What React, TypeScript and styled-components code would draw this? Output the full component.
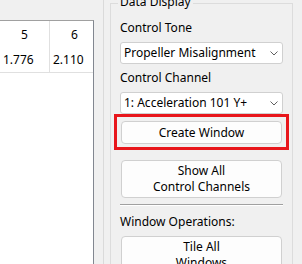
import styled, { createGlobalStyle } from 'styled-components';

const GlobalStyle = createGlobalStyle`
  html, body {
    margin: 0;
    padding: 0;
    background: #f0f0f0;
    overflow: hidden;
  }
  body {
    font-family: 'Noto Sans', 'Segoe UI', sans-serif;
    font-size: 12px;
    color: #000;
  }
`;

// ---------------------------------------------------------------------------
// Layout
// ---------------------------------------------------------------------------

const Screen = styled.div`
  display: flex;
  width: 302px;
  height: 264px;
  overflow: hidden;
  background: #f0f0f0;
`;

const GridPane = styled.div`
  flex: none;
  width: 93px;
  margin-top: 20px;
  background: #fff;
  border-top: 1px solid #a0a0a0;
  border-right: 1px solid #828790;
  overflow: hidden;
`;

const Grid = styled.table`
  table-layout: fixed;
  border-collapse: separate;
  border-spacing: 0;
  width: 100px;
`;

const HeaderCell = styled.th`
  box-sizing: border-box;
  width: 50px;
  height: 26px;
  padding: 0;
  font-weight: 400;
  text-align: center;
  border-right: 1px solid #e0e0e0;
`;

const ValueCell = styled.td`
  box-sizing: border-box;
  width: 50px;
  height: 26px;
  padding: 0 0 0 3px;
  text-align: left;
  white-space: nowrap;
  border-right: 1px solid #e0e0e0;
  border-bottom: 1px solid #e0e0e0;
`;

const SidePanel = styled.div`
  flex: none;
  margin-left: 9px;
  padding-left: 6px;
  border-left: 1px solid #dadada;
`;

const GroupBox = styled.section`
  position: relative;
  display: flex;
  flex-direction: column;
  width: 163px;
  margin-top: 3px;
  padding: 16px 9px 0;
  border: 1px solid #dcdcdc;
  border-bottom: none;
`;

const GroupTitle = styled.span`
  position: absolute;
  top: -10px;
  left: 7px;
  padding: 0 2px;
  line-height: 16px;
  background: #f0f0f0;
`;

const FieldLabel = styled.div<{ $gap: number }>`
  margin-top: ${({ $gap }) => $gap}px;
  line-height: 16px;
  white-space: nowrap;
`;

const Combo = styled.div`
  box-sizing: border-box;
  display: flex;
  align-items: center;
  justify-content: space-between;
  height: 22px;
  margin-top: 6px;
  padding: 0 4px 0 3px;
  background: #fff;
  border: 1px solid #d0d0d0;
  border-radius: 3px;
  line-height: 16px;
  white-space: nowrap;

  svg {
    flex: none;
  }
`;

const Button = styled.button<{ $gap: number; $tall?: boolean; $marked?: boolean }>`
  position: relative;
  box-sizing: border-box;
  display: flex;
  align-items: center;
  justify-content: center;
  height: ${({ $tall }) => ($tall ? 38 : 23)}px;
  margin: ${({ $gap }) => $gap}px 1px 0;
  padding: 0;
  font: inherit;
  line-height: 16px;
  color: #000;
  text-align: center;
  background: #fdfdfd;
  border: 1px solid #d0d0d0;
  border-radius: 4px;
  flex: none;

  /* red highlight frame drawn over the surrounding area */
  &::after {
    content: '';
    display: ${({ $marked }) => ($marked ? 'block' : 'none')};
    position: absolute;
    top: -8px;
    bottom: -7px;
    left: -8px;
    right: -8px;
    border: 3px solid #e8161b;
    pointer-events: none;
  }
`;

const Separator = styled.div`
  height: 0;
  margin-top: 6px;
  border-top: 1px solid #a0a0a0;
  border-bottom: 1px solid #fff;
`;

const Chevron = () => (
  <svg width="8" height="5" viewBox="0 0 8 5">
    <polyline points="0.5,0.5 4,4 7.5,0.5" fill="none" stroke="#606060" strokeWidth="1" />
  </svg>
);

export default function App() {
  return (
    <>
      <GlobalStyle />
      <Screen>
        <GridPane>
          <Grid>
            <thead>
              <tr>
                <HeaderCell>5</HeaderCell>
                <HeaderCell>6</HeaderCell>
              </tr>
            </thead>
            <tbody>
              <tr>
                <ValueCell>1.776</ValueCell>
                <ValueCell>2.110</ValueCell>
              </tr>
            </tbody>
          </Grid>
        </GridPane>

        <SidePanel>
          <GroupBox>
            <GroupTitle>Data Display</GroupTitle>
            <FieldLabel $gap={0}>Control Tone</FieldLabel>
            <Combo>
              <span>Propeller Misalignment</span>
              <Chevron />
            </Combo>
            <FieldLabel $gap={6}>Control Channel</FieldLabel>
            <Combo>
              <span>1: Acceleration 101 Y+</span>
              <Chevron />
            </Combo>
            <Button $gap={7} $marked>
              Create Window
            </Button>
            <Button $gap={16} $tall>
              Show All
              <br />
              Control Channels
            </Button>
            <Separator />
            <FieldLabel $gap={8}>Window Operations:</FieldLabel>
            <Button $gap={6} $tall>
              Tile All
              <br />
              Windows
            </Button>
          </GroupBox>
        </SidePanel>
      </Screen>
    </>
  );
}
